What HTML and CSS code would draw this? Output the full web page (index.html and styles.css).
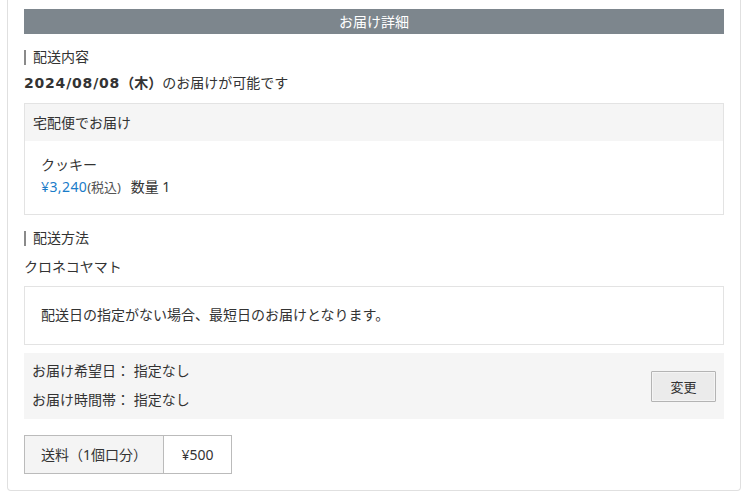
FILE: index.html
```html
<!DOCTYPE html>
<html lang="ja">
<head>
<meta charset="utf-8">
<title>お届け詳細</title>
<link rel="stylesheet" href="styles.css">
</head>
<body>
<div class="card">
  <div class="card-title">お届け詳細</div>

  <div class="section-head">配送内容</div>
  <div class="date-line"><strong><span class="date-num">2024/08/08</span>（木）</strong>のお届けが可能です</div>

  <div class="box">
    <div class="box-head">宅配便でお届け</div>
    <div class="box-body">
      <div class="line">クッキー</div>
      <div class="line"><span class="price">¥3,240</span><span class="tax">(税込)</span> 数量 1</div>
    </div>
  </div>

  <div class="section-head second">配送方法</div>
  <div class="carrier">クロネコヤマト</div>

  <div class="box note">配送日の指定がない場合、最短日のお届けとなります。</div>

  <div class="spec">
    <div class="spec-lines">
      <div class="line">お届け希望日： 指定なし</div>
      <div class="line gap">お届け時間帯： 指定なし</div>
    </div>
    <button class="btn">変更</button>
  </div>

  <div class="fee">
    <div class="fee-label">送料（1個口分）</div>
    <div class="fee-value">¥500</div>
  </div>
</div>
</body>
</html>
```

FILE: styles.css
```css
html, body {
  margin: 0;
  padding: 0;
  background: #fff;
}
body {
  font-family: "Noto Sans", "Noto Sans CJK JP", sans-serif;
  font-size: 14px;
  color: #333;
}
.card {
  margin: 0 7px;
  border: 1px solid #e0e0e0;
  border-top: none;
  border-radius: 0 0 4px 4px;
  padding: 9px 16px 16px;
}
.card-title {
  height: 25px;
  line-height: 25px;
  background: #7d868d;
  color: #fff;
  text-align: center;
  font-size: 14px;
}
.section-head {
  display: flex;
  align-items: center;
  gap: 7px;
  margin-top: 13px;
  line-height: 20px;
}
.section-head::before {
  content: "";
  width: 2px;
  height: 15px;
  background: #8a8a8a;
}
.section-head.second {
  margin-top: 13px;
}
.date-line {
  margin-top: 6px;
  line-height: 20px;
}
.date-line strong {
  font-weight: 700;
}
.date-num {
  font-family: "DejaVu Sans", "Noto Sans CJK JP", sans-serif;
  letter-spacing: 0.8px;
}
.box {
  margin-top: 10px;
  border: 1px solid #e3e3e3;
}
.box-head {
  height: 37px;
  line-height: 37px;
  padding: 0 8px;
  background: #f5f5f5;
}
.box-body {
  padding: 13px 16px 16px;
}
.line {
  line-height: 22px;
}
.price {
  color: #1a7cc9;
  letter-spacing: 0.4px;
}
.tax {
  font-size: 13px;
  color: #555;
  margin-right: 6px;
}
.carrier {
  margin-top: 9px;
  line-height: 20px;
}
.box.note {
  margin-top: 9px;
  padding: 18px 16px 19px;
  line-height: 20px;
}
.spec {
  margin-top: 8px;
  background: #f5f5f5;
  padding: 8px 8px 9px;
  display: flex;
  align-items: center;
  justify-content: space-between;
}
.spec .line {
  line-height: 20px;
}
.spec .line.gap {
  margin-top: 9px;
}
.btn {
  width: 65px;
  height: 31px;
  margin-top: 1px;
  background: #ebebeb;
  border: 1px solid #b4b4b4;
  box-shadow: inset 0 0 0 1px #f4f4f4;
  font-family: inherit;
  font-size: 13px;
  color: #333;
  padding: 0;
  border-radius: 1px;
}
.fee {
  margin-top: 16px;
  display: inline-flex;
  border: 1px solid #bbb;
  height: 37px;
  line-height: 37px;
}
.fee-label {
  width: 139px;
  box-sizing: border-box;
  padding-left: 16px;
  background: #f4f4f4;
  border-right: 1px solid #bbb;
}
.fee-value {
  width: 67px;
  text-align: center;
}
```
